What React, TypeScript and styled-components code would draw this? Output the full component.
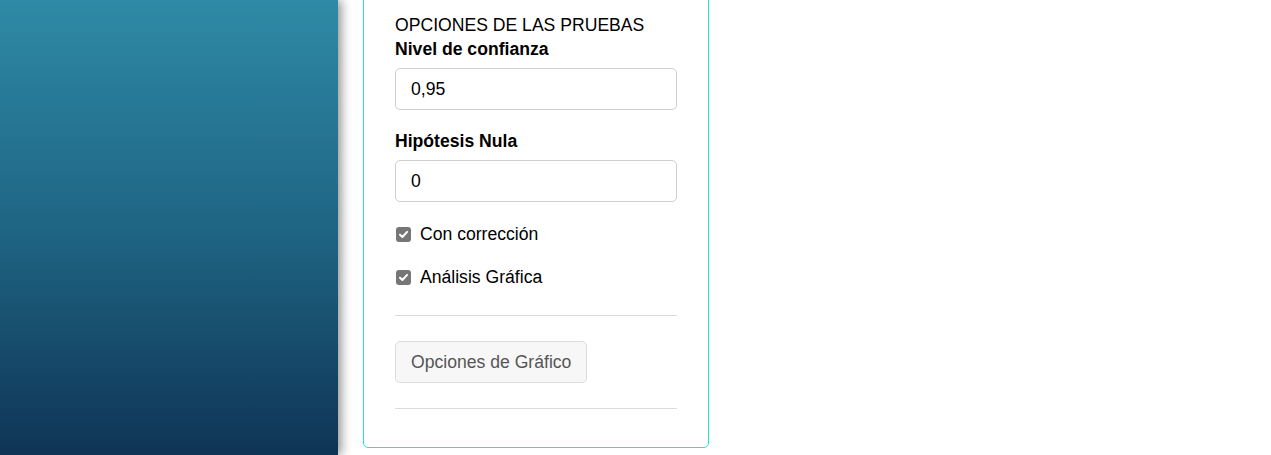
import React from "react";
import styled, { createGlobalStyle } from "styled-components";

const Global = createGlobalStyle`
  html, body { margin: 0; padding: 0; background: #fff; }
  body { font-family: "Liberation Sans", Arial, sans-serif; font-size: 17.6px; color: #000; overflow: hidden; }
`;

const Layout = styled.div`
  display: flex;
  height: 455px;
  overflow: hidden;
`;

const Sidebar = styled.aside`
  width: 338px;
  flex: 0 0 338px;
  height: 100%;
  background: linear-gradient(180deg, #2e8aa6 0%, #1f6584 50%, #0f3455 100%);
  box-shadow: 3px 0 10px rgba(0, 0, 0, 0.45);
  position: relative;
  z-index: 1;
`;

const Main = styled.main`
  flex: 1;
  padding-left: 25px;
`;

const Card = styled.section`
  width: 282px;
  margin-top: -20px;
  padding: 32px 31px 38px 31px;
  border: 1px solid #22e6d2;
  border-radius: 5px;
  background: #fff;
`;

const Heading = styled.div`
  font-size: 17.6px;
  line-height: 24px;
  text-transform: uppercase;
`;

const Label = styled.label`
  display: block;
  font-weight: bold;
  font-size: 17.6px;
  line-height: 24px;
  margin-bottom: 7px;
`;

const Field = styled.div`
  margin-bottom: 19px;
`;

const TextInput = styled.input`
  box-sizing: border-box;
  display: block;
  width: 100%;
  height: 42px;
  padding: 0 15px;
  border: 1px solid #cfcfcf;
  border-radius: 5px;
  font-family: inherit;
  font-size: 17.6px;
  color: #000;
  background: #fff;
  outline: none;
`;

const CheckList = styled.div`
  display: flex;
  flex-direction: column;
  gap: 17px;
  margin-top: 19px;
  margin-bottom: 25px;
`;

const CheckRow = styled.label`
  display: flex;
  align-items: center;
  gap: 9px;
  height: 26px;
  font-size: 17.6px;
`;

const Box = styled.span`
  width: 15px;
  height: 15px;
  border-radius: 3px;
  background: #767676;
  display: inline-flex;
  align-items: center;
  justify-content: center;
  margin-left: 1px;
`;

const Divider = styled.hr`
  border: 0;
  border-top: 1px solid #dcdcdc;
  margin: 0;
`;

const Button = styled.button`
  height: 42px;
  padding: 0 15px;
  margin: 25px 0;
  border: 1px solid #dcdcdc;
  border-radius: 5px;
  background: #f7f7f7;
  color: #555;
  font-family: inherit;
  font-size: 17.6px;
  display: block;
`;

const Check: React.FC<{ label: string }> = ({ label }) => (
  <CheckRow>
    <Box>
      <svg width="11" height="11" viewBox="0 0 10 10">
        <path d="M1.8 5.2 L4 7.3 L8.3 2.6" fill="none" stroke="#fff" strokeWidth="1.8" strokeLinecap="round" strokeLinejoin="round" />
      </svg>
    </Box>
    {label}
  </CheckRow>
);

export default function App() {
  return (
    <>
      <Global />
      <Layout>
        <Sidebar />
        <Main>
          <Card>
            <Heading>Opciones de las pruebas</Heading>
            <Field>
              <Label>Nivel de confianza</Label>
              <TextInput defaultValue="0,95" />
            </Field>
            <Field>
              <Label>Hipótesis Nula</Label>
              <TextInput defaultValue="0" />
            </Field>
            <CheckList>
              <Check label="Con corrección" />
              <Check label="Análisis Gráfica" />
            </CheckList>
            <Divider />
            <Button>Opciones de Gráfico</Button>
            <Divider />
          </Card>
        </Main>
      </Layout>
    </>
  );
}
